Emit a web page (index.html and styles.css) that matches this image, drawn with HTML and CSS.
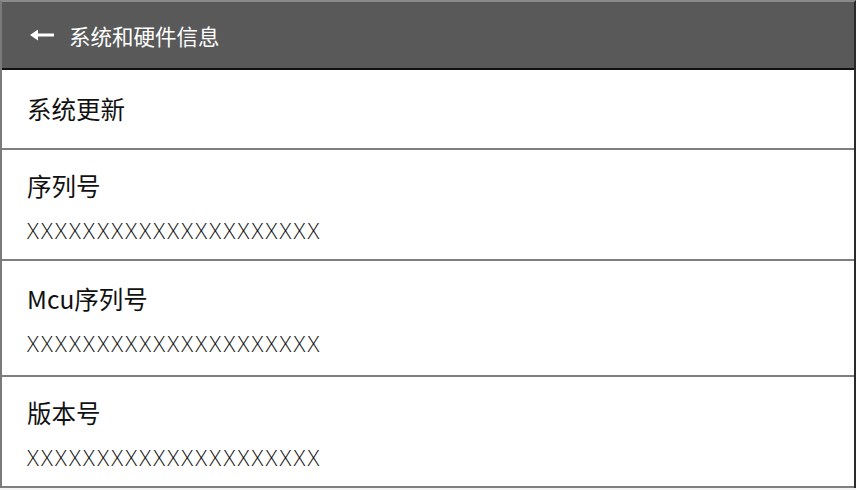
FILE: index.html
```html
<!DOCTYPE html>
<html lang="zh-CN">
<head>
    <meta charset="UTF-8">
    <meta name="viewport" content="width=device-width, initial-scale=1.0">
    <title>系统和硬件信息</title>
    <link rel="stylesheet" href="styles.css">
</head>
<body>

<div class="frame">
    <div class="topbar">
        <button class="back" aria-label="返回">
            <svg width="26" height="14" viewBox="0 0 26 14">
                <path d="M1 7 L9 1.5 L9 5.5 L25 5.5 L25 8.5 L9 8.5 L9 12.5 Z" fill="#fff"/>
            </svg>
        </button>
        <span class="title">系统和硬件信息</span>
    </div>

    <div class="item item-single">
        <div class="label">系统更新</div>
    </div>

    <div class="item">
        <div class="label">序列号</div>
        <div class="value">XXXXXXXXXXXXXXXXXXXXX</div>
    </div>

    <div class="item item-tall">
        <div class="label">Mcu序列号</div>
        <div class="value">XXXXXXXXXXXXXXXXXXXXX</div>
    </div>

    <div class="item">
        <div class="label">版本号</div>
        <div class="value">XXXXXXXXXXXXXXXXXXXXX</div>
    </div>
</div>

</body>
</html>
```

FILE: styles.css
```css
body {
    margin: 0;
    background-color: #f4f4f4;
    font-family: "Noto Sans CJK SC", "Noto Sans", sans-serif;
}
.frame {
    width: 852px;
    background-color: white;
    border-top: 2px solid #8a8a8a;
    border-left: 2px solid #7a7a7a;
    border-right: 2px solid #2a2a2a;
}
.topbar {
    display: flex;
    align-items: center;
    height: 66px;
    background-color: #595959;
    border-bottom: 2px solid #111;
    color: white;
}
.back {
    display: flex;
    align-items: center;
    background-color: transparent;
    border: none;
    padding: 0;
    margin-left: 27px;
    margin-right: 14px;
    cursor: pointer;
}
.title {
    font-size: 21.5px;
    line-height: 28px;
    margin-top: 2px;
}
.item {
    display: flex;
    flex-direction: column;
    justify-content: center;
    height: 105px;
    padding-top: 4px;
    padding-left: 25px;
    border-bottom: 2px solid #7f7f7f;
    color: #111;
}
.item-single {
    height: 78px;
    padding-top: 0;
}
.item-tall {
    height: 110px;
}
.label {
    font-size: 24.5px;
    line-height: 32px;
}
.value {
    margin-top: 14px;
    font-family: "Open Sans", "Liberation Sans", sans-serif;
    font-weight: 300;
    font-size: 22px;
    line-height: 28px;
    letter-spacing: 2.2px;
    color: #111;
}
```
